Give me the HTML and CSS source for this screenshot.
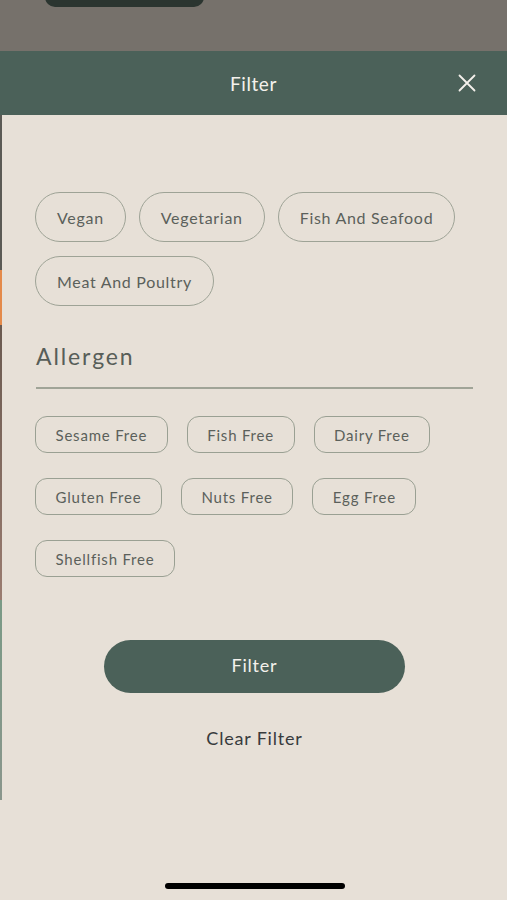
FILE: index.html
```html
<!DOCTYPE html>
<html lang="en">
<head>
<meta charset="utf-8">
<title>Filter</title>
<link rel="stylesheet" href="styles.css">
</head>
<body>
<div class="screen">
  <div class="edge"></div>
  <div class="backdrop">
    <div class="back-pill"></div>
  </div>
  <header class="sheet-header">
    <h1 class="title">Filter</h1>
    <button class="close" aria-label="Close">
      <svg width="18" height="18" viewBox="0 0 18 18"><path d="M1.5 1.5 L16.5 16.5 M16.5 1.5 L1.5 16.5" stroke="#f4f1ec" stroke-width="1.8" stroke-linecap="round" fill="none"/></svg>
    </button>
  </header>
  <main class="sheet-body">
    <div class="chips diet">
      <span class="chip">Vegan</span>
      <span class="chip">Vegetarian</span>
      <span class="chip">Fish And Seafood</span>
      <span class="chip">Meat And Poultry</span>
    </div>
    <h2 class="section">Allergen</h2>
    <div class="chips allergen">
      <span class="tag">Sesame Free</span>
      <span class="tag">Fish Free</span>
      <span class="tag">Dairy Free</span>
      <span class="tag">Gluten Free</span>
      <span class="tag">Nuts Free</span>
      <span class="tag">Egg Free</span>
      <span class="tag">Shellfish Free</span>
    </div>
    <div class="actions">
      <button class="apply">Filter</button>
      <button class="clear">Clear Filter</button>
    </div>
  </main>
  <div class="home-indicator"></div>
</div>
</body>
</html>
```
FILE: styles.css
```css
* { box-sizing: border-box; }
html, body { margin: 0; padding: 0; }
body {
  background: #e7e0d7;
  font-family: "Lato", "Open Sans", sans-serif;
}
.screen {
  position: relative;
  width: 507px;
  height: 900px;
  overflow: hidden;
  background: #e7e0d7;
  display: flex;
  flex-direction: column;
}
.edge {
  position: absolute;
  left: 0;
  top: 0;
  width: 2px;
  height: 800px;
  background: linear-gradient(to bottom,
    #8a857f 0, #8a857f 25px,
    #6d5f84 25px, #6d5f84 51px,
    #4b6159 51px, #4b6159 115px,
    #5b5a55 115px, #5b5a55 270px,
    #e48a4a 270px, #e48a4a 325px,
    #6a5a50 325px, #9a7c70 600px,
    #7a9a86 600px, #8a968c 800px);
}
.backdrop {
  height: 51px;
  background: #76716b;
  position: relative;
  flex: none;
}
.back-pill {
  position: absolute;
  left: 45px;
  top: -20px;
  width: 159px;
  height: 27px;
  border-radius: 10px;
  background: #2b3530;
}
.sheet-header {
  height: 64px;
  flex: none;
  background: #4b6159;
  display: flex;
  align-items: center;
  justify-content: center;
  position: relative;
}
.title {
  margin: 0;
  color: #f4f1ec;
  font-size: 19px;
  font-weight: 400;
  letter-spacing: 0.6px;
}
.close {
  position: absolute;
  right: 31px;
  top: 23px;
  background: none;
  border: 0;
  padding: 0;
  width: 18px;
  height: 18px;
  display: flex;
}
.sheet-body {
  padding: 77px 34px 0 35px;
  display: flex;
  flex-direction: column;
}
.chips {
  display: flex;
  flex-wrap: wrap;
}
.diet { gap: 14px 13px; }
.chip {
  height: 50px;
  padding: 0 21px;
  border: 1.5px solid #9ea396;
  border-radius: 25px;
  display: flex;
  align-items: center;
  font-size: 16px;
  letter-spacing: 0.7px;
  color: #5b605b;
}
.section {
  margin: 36px 0 0 1px;
  font-size: 23px;
  font-weight: 400;
  letter-spacing: 1.9px;
  color: #585e59;
  line-height: 28px;
  padding-bottom: 17px;
  border-bottom: 2px solid #a0a497;
}
.allergen {
  margin-top: 27px;
  gap: 25px 19px;
  width: 410px;
}
.tag {
  height: 37px;
  padding: 0 19.5px;
  border: 1.5px solid #9aa093;
  border-radius: 12px;
  display: flex;
  align-items: center;
  font-size: 15px;
  letter-spacing: 0.8px;
  color: #5b605b;
}
.actions {
  margin-top: 63px;
  display: flex;
  flex-direction: column;
  align-items: center;
  margin-right: -1px;
}
.apply {
  width: 301px;
  height: 53px;
  border-radius: 27px;
  border: 0;
  background: #4b6159;
  color: #f4f1ec;
  font-family: inherit;
  font-size: 18px;
  letter-spacing: 0.8px;
  padding-bottom: 4px;
}
.clear {
  margin-top: 34px;
  background: none;
  border: 0;
  padding: 0;
  font-family: inherit;
  font-size: 18px;
  letter-spacing: 0.8px;
  color: #383b3d;
}
.home-indicator {
  position: absolute;
  left: 165px;
  top: 883px;
  width: 180px;
  height: 6px;
  border-radius: 3px;
  background: #000;
}
```
